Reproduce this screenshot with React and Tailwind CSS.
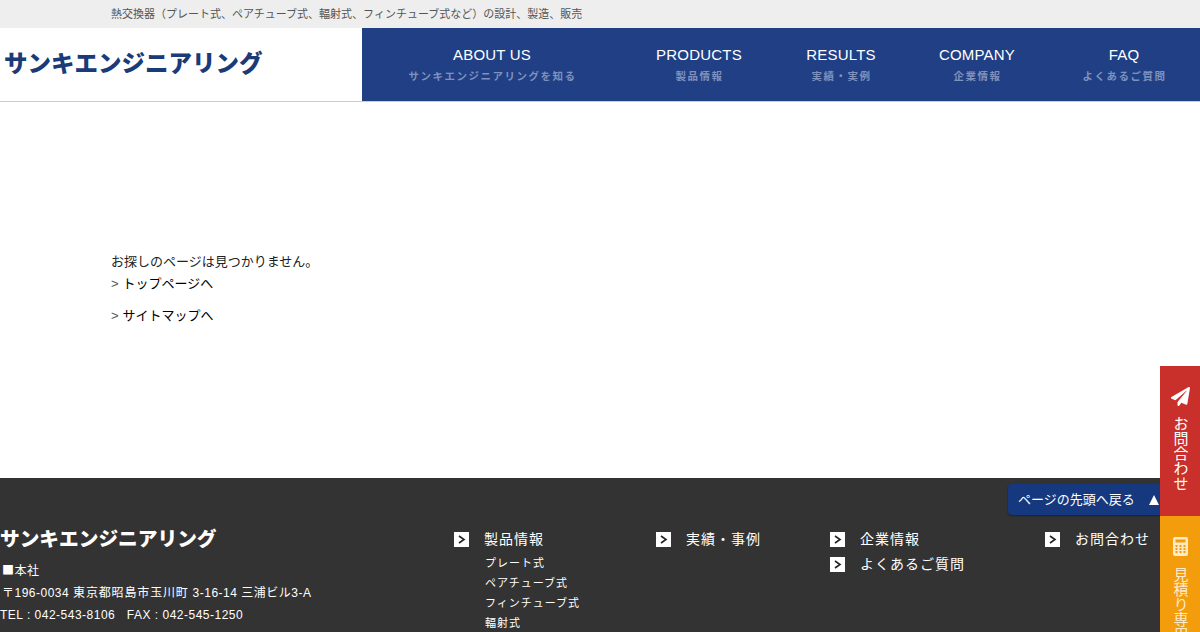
import { FaPaperPlane } from "react-icons/fa";

const font = "font-['Liberation_Sans','Noto_Sans_CJK_JP',sans-serif]";

const navItems = [
  { en: "ABOUT US", ja: "サンキエンジニアリングを知る" },
  { en: "PRODUCTS", ja: "製品情報" },
  { en: "RESULTS", ja: "実績・実例" },
  { en: "COMPANY", ja: "企業情報" },
  { en: "FAQ", ja: "よくあるご質問" },
];

const Arrow = () => (
  <span className="flex h-[15px] w-[15px] shrink-0 items-center justify-center bg-white">
    <svg width="9" height="9" viewBox="0 0 9 9" fill="none" stroke="#222" strokeWidth="1.6">
      <path d="M2 1l5 3.5L2 8" />
    </svg>
  </span>
);

const Calculator = () => (
  <svg width="15" height="19" viewBox="0 0 15 19">
    <rect width="15" height="19" rx="2" fill="#fdebc8" />
    <rect x="2.5" y="2.5" width="10" height="3" fill="#f39c0c" />
    <path
      d="M2.5 8h2v2h-2zM6.5 8h2v2h-2zM10.5 8h2v2h-2zM2.5 11h2v2h-2zM6.5 11h2v2h-2zM10.5 11h2v2h-2zM2.5 14h2v2h-2zM6.5 14h2v2h-2zM10.5 14h2v2h-2z"
      fill="#f39c0c"
    />
  </svg>
);

const FooterLink = ({ children }) => (
  <div className="flex h-[25px] items-center gap-[15px] text-[14px] tracking-[1px] text-white">
    <Arrow />
    <span>{children}</span>
  </div>
);

const App = () => {
  return (
    <div className={`relative h-[632px] overflow-hidden bg-white ${font}`}>
      {/* top bar */}
      <div className="flex h-[28px] items-center bg-[#eeeeee] pl-[111px] text-[11px] text-[#555]">
        熱交換器（プレート式、ペアチューブ式、輻射式、フィンチューブ式など）の設計、製造、販売
      </div>

      {/* header */}
      <header className="flex h-[74px] border-b border-[#ccc]">
        <div className="flex w-[362px] items-center pl-[4px]">
          <span className="text-[23.5px] leading-none font-black whitespace-nowrap text-[#1b3a78]">
            サンキエンジニアリング
          </span>
        </div>
        <nav className="grid flex-1 grid-cols-[260px_154px_130px_142px_152px] bg-[#203f84] text-center">
          {navItems.map((item) => (
            <div key={item.en} className="pt-[18px]">
              <div className="text-[15px] leading-[18px] tracking-[0.2px] text-white">{item.en}</div>
              <div className="mt-[5px] pl-[1px] text-[10.5px] leading-[14px] font-bold tracking-[1.5px] text-[#7e92bd]">
                {item.ja}
              </div>
            </div>
          ))}
        </nav>
      </header>

      {/* main */}
      <main className="h-[376px] pt-[151px] pl-[111px] text-[13px] text-black">
        <p className="leading-[18px] text-[#222]">お探しのページは見つかりません。</p>
        <p className="mt-[4px] flex leading-[18px]">
          <span className="mr-[4px] text-[#555]">&gt;</span>トップページへ
        </p>
        <p className="mt-[14px] flex leading-[18px]">
          <span className="mr-[4px] text-[#555]">&gt;</span>サイトマップへ
        </p>
      </main>

      {/* footer */}
      <footer className="grid h-[154px] grid-cols-[454px_202px_174px_215px_1fr] bg-[#333333] pt-[49px] text-white">
        <div>
          <div className="text-[19.7px] leading-[24px] font-black whitespace-nowrap">サンキエンジニアリング</div>
          <div className="mt-[8px] text-[12px] leading-[22px] tracking-[0.5px]">
            <p className="pl-[2px]">
              <span className="font-['Noto_Sans_CJK_JP']">■</span>本社
            </p>
            <p className="pl-[2px]">
              〒196-0034 <span className="tracking-[0.85px]">東京都昭島市玉川町</span> 3-16-14 三浦ビル3-A
            </p>
            <p>TEL : 042-543-8106 &nbsp; FAX : 042-545-1250</p>
          </div>
        </div>
        <div>
          <FooterLink>製品情報</FooterLink>
          <ul className="mt-[1px] pl-[31px] text-[11px] leading-[20px] tracking-[1px]">
            <li>プレート式</li>
            <li>ペアチューブ式</li>
            <li>フィンチューブ式</li>
            <li>輻射式</li>
          </ul>
        </div>
        <div>
          <FooterLink>実績・事例</FooterLink>
        </div>
        <div>
          <FooterLink>企業情報</FooterLink>
          <FooterLink>よくあるご質問</FooterLink>
        </div>
        <div>
          <FooterLink>お問合わせ</FooterLink>
        </div>
      </footer>

      {/* page top button */}
      <a className="absolute top-[484px] right-[40px] flex h-[31px] w-[152px] items-center justify-between rounded-tl-[4px] rounded-bl-[4px] bg-[#16387f] pr-[1px] pl-[10px] text-[13px] text-white shadow-[0_1px_2px_rgba(0,0,0,0.4)]">
        <span>ページの先頭へ戻る</span>
        <span className="h-0 w-0 border-r-[5.5px] border-b-[10px] border-l-[5.5px] border-r-transparent border-b-white border-l-transparent" />
      </a>

      {/* side buttons */}
      <div className="absolute top-[366px] right-0 flex w-[40px] flex-col">
        <a className="flex h-[150px] flex-col items-center bg-[#c9302c] pt-[21px] text-white">
          <FaPaperPlane className="text-[19px]" />
          <span className="mt-[10px] mr-[1px] text-[15px] leading-[20px] [text-orientation:upright] [writing-mode:vertical-rl]">
            お問合わせ
          </span>
        </a>
        <a className="flex h-[150px] flex-col items-center bg-[#f39c0c] pt-[21px] text-[#fdebc8]">
          <Calculator />
          <span className="mt-[11px] mr-[1px] text-[15px] leading-[20px] [text-orientation:upright] [writing-mode:vertical-rl]">
            見積り専用
          </span>
        </a>
      </div>
    </div>
  );
};

export default App;
